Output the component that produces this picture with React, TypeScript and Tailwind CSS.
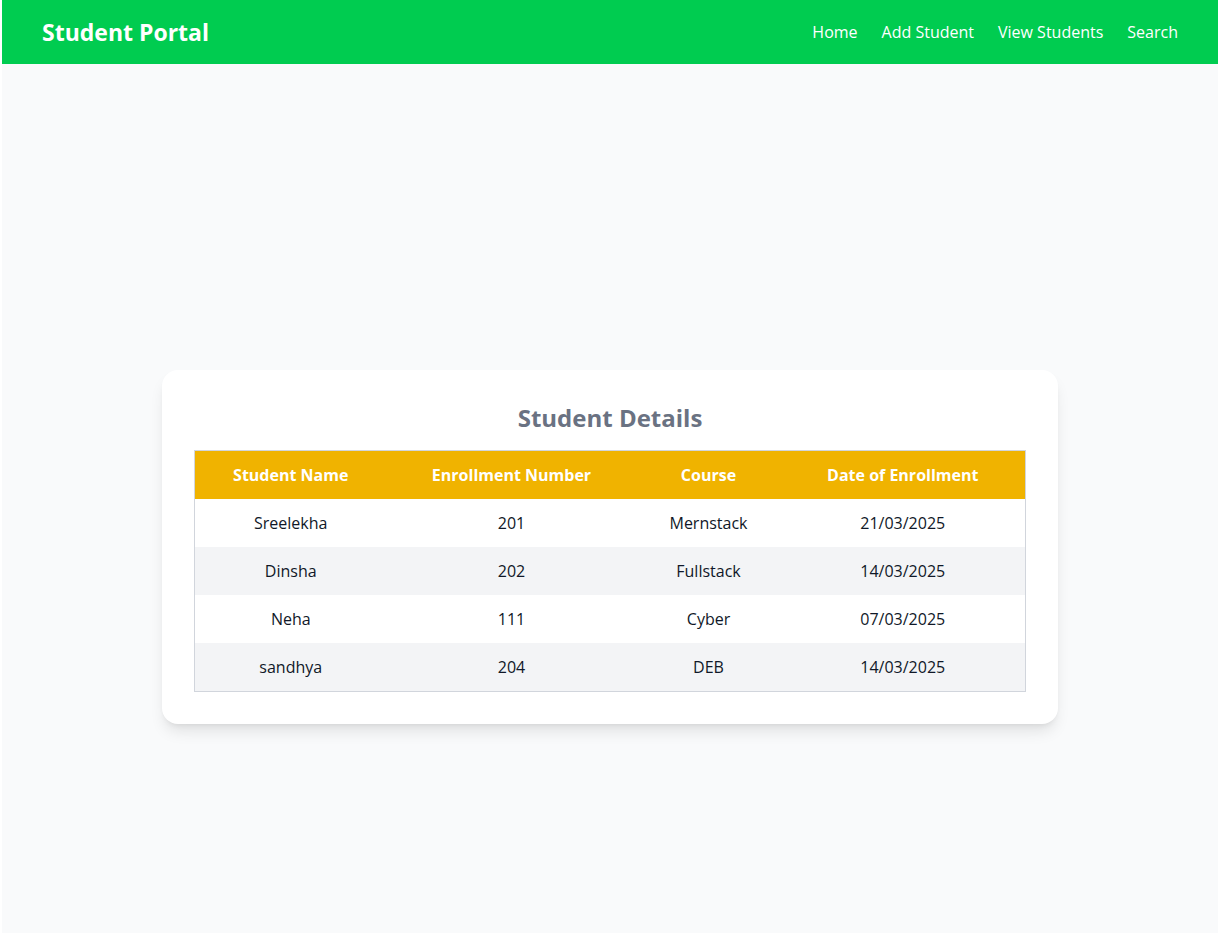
import React from 'react';

interface Student {
  name: string;
  enrollment: string;
  course: string;
  date: string;
}

const students: Student[] = [
  { name: 'Sreelekha', enrollment: '201', course: 'Mernstack', date: '21/03/2025' },
  { name: 'Dinsha', enrollment: '202', course: 'Fullstack', date: '14/03/2025' },
  { name: 'Neha', enrollment: '111', course: 'Cyber', date: '07/03/2025' },
  { name: 'sandhya', enrollment: '204', course: 'DEB', date: '14/03/2025' }
];

const links = ['Home', 'Add Student', 'View Students', 'Search'];

export default function App() {
  return (
    <div className="min-h-screen bg-white px-[2px] font-['Open_Sans',sans-serif]">
      <nav className="h-16 bg-[#00cc50] px-10 flex items-center justify-between">
        <h1 className="text-[23px] font-bold text-white">Student Portal</h1>
        <ul className="flex items-center gap-6 text-white text-base">
          {links.map(link => (
            <li key={link}>
              <a href="#" className="hover:underline">{link}</a>
            </li>
          ))}
        </ul>
      </nav>

      <main className="h-[869px] bg-gray-50 flex justify-center pt-[306px]">
        <div className="w-[896px] h-fit bg-white rounded-2xl shadow-lg p-8">
          <h2 className="text-2xl font-bold text-gray-500 text-center mb-4">Student Details</h2>
          <table className="w-full border border-gray-300 border-collapse text-base leading-6">
            <thead>
              <tr className="bg-[#f0b300] text-white font-bold">
                <th className="w-[192px] py-3">Student Name</th>
                <th className="w-[250px] py-3">Enrollment Number</th>
                <th className="w-[144px] py-3">Course</th>
                <th className="w-[245px] py-3">Date of Enrollment</th>
              </tr>
            </thead>
            <tbody className="text-gray-900">
              {students.map((s, i) => (
                <tr key={s.name} className={i % 2 === 1 ? 'bg-gray-100' : 'bg-white'}>
                  <td className="py-3 text-center">{s.name}</td>
                  <td className="py-3 text-center">{s.enrollment}</td>
                  <td className="py-3 text-center">{s.course}</td>
                  <td className="py-3 text-center">{s.date}</td>
                </tr>
              ))}
            </tbody>
          </table>
        </div>
      </main>
    </div>
  );
}
